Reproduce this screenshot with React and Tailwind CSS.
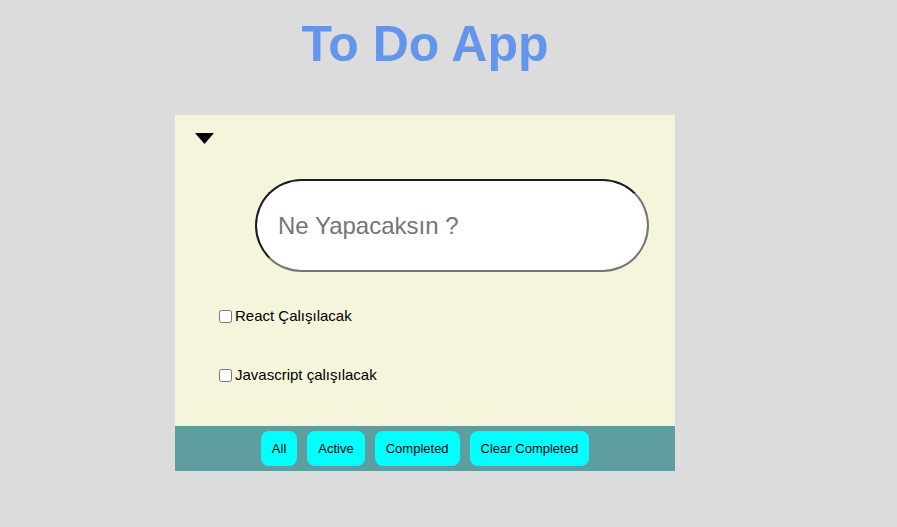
import React, { useState } from 'react';

const todos = [
  { id: 1, text: 'React Çalışılacak' },
  { id: 2, text: 'Javascript çalışılacak' },
];

const filters = ['All', 'Active', 'Completed', 'Clear Completed'];

export default function App() {
  const [value, setValue] = useState('');

  return (
    <div className="min-h-[527px] bg-[#dcdcdc] font-['Liberation_Sans',Arial,sans-serif]">
      <div className="w-[850px] flex flex-col items-center">
        {/* header */}
        <h1 className="mt-[14px] h-[60px] text-[50px] leading-[60px] font-bold text-[#6495ed]">To Do App</h1>

        {/* card */}
        <div className="mt-[41px] w-[500px] bg-[#f5f5dc]">
          <div className="pt-[18px] pl-[20px]">
            <svg width="19" height="11" viewBox="0 0 19 11" className="block">
              <polygon points="0,0 19,0 9.5,11" fill="#000" />
            </svg>
          </div>

          <input
            type="text"
            value={value}
            onChange={(e) => setValue(e.target.value)}
            placeholder="Ne Yapacaksın ?"
            className="block mt-[35px] ml-[80px] w-[394px] h-[93px] rounded-full bg-white border-2 border-t-[#1a1a1a] border-l-[#1a1a1a] border-b-[#767676] border-r-[#767676] pl-[21px] text-[24px] text-black placeholder:text-[#757575] outline-none"
          />

          <div className="pt-[34px] pl-[44px] flex flex-col gap-[39px]">
            {todos.map((todo) => (
              <label key={todo.id} className="h-[20px] flex items-center text-[15px] text-black">
                <input type="checkbox" className="w-[13px] h-[13px] m-0 mr-[3px]" />
                {todo.text}
              </label>
            ))}
          </div>

          {/* footer */}
          <div className="mt-[41px] h-[45px] bg-[#5f9ea0] flex items-center justify-center gap-[10px]">
            {filters.map((f) => (
              <button key={f} className="h-[35px] px-[11px] rounded-[8px] bg-[#00ffff] text-[13px] text-black">
                {f}
              </button>
            ))}
          </div>
        </div>
      </div>
    </div>
  );
}
